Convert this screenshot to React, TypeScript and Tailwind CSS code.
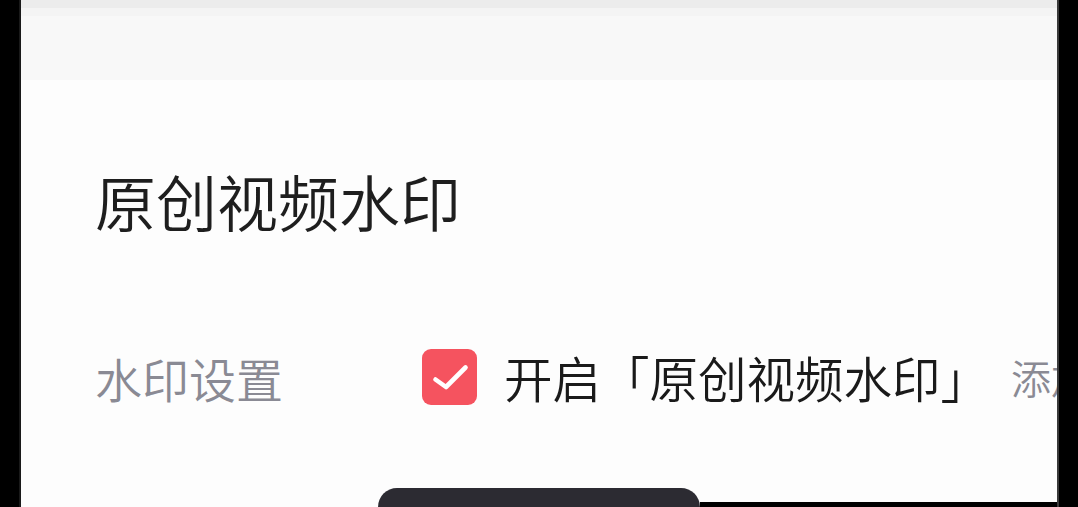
import React from "react"

const cjk = { fontFamily: '"Noto Sans CJK SC", "Noto Sans", sans-serif' }

function CheckBox() {
  return (
    <div className="h-[56px] w-[55px] shrink-0 rounded-[9px] bg-[#f5535f]">
      <svg width="55" height="56" viewBox="0 0 55 56" fill="none">
        <path d="M13.5 30.5L24 38L43.5 18.5" stroke="#fff" strokeWidth="4.6" strokeLinecap="round" strokeLinejoin="round" />
      </svg>
    </div>
  )
}

export default function App() {
  return (
    <div className="flex h-[507px] w-[1078px] bg-black" style={cjk}>
      <div className="w-[21px] shrink-0 border-r-[2px] border-[#1a1a1a]" />
      <div className="relative flex w-[1036px] flex-col overflow-hidden bg-[#fdfdfd]">
        <div className="flex h-[80px] flex-col bg-[#f8f8f8]">
          <div className="h-[8px] bg-[#ececec]" />
          <div className="h-[8px] bg-[#f4f4f4]" />
        </div>

        <div className="pl-[74px] pt-[90px]">
          <h1 className="text-[61px] font-[350] leading-none text-[#1e1e1e]">原创视频水印</h1>

          <div className="mt-[118px] flex h-[56px] items-center whitespace-nowrap">
            <div className="w-[327px] shrink-0 text-[47px] font-[350] leading-none text-[#8a8a94]">水印设置</div>
            <CheckBox />
            <div className="ml-[27px] text-[48.5px] font-[350] leading-none text-[#1a1a1a]">开启「原创视频水印」</div>
            <div className="ml-[22px] text-[40px] font-[350] leading-none text-[#8a8a94]">添加后视频将显示原创水印</div>
          </div>
        </div>

        <div className="absolute bottom-0 left-[357px] h-[19px] w-[322px] rounded-t-[22px] bg-[#2c2b32]" />
        <div className="absolute bottom-0 left-[679px] right-0 h-[5px] bg-black" />
      </div>
      <div className="flex-1 border-l-[2px] border-[#3a3a3a]" />
    </div>
  )
}
